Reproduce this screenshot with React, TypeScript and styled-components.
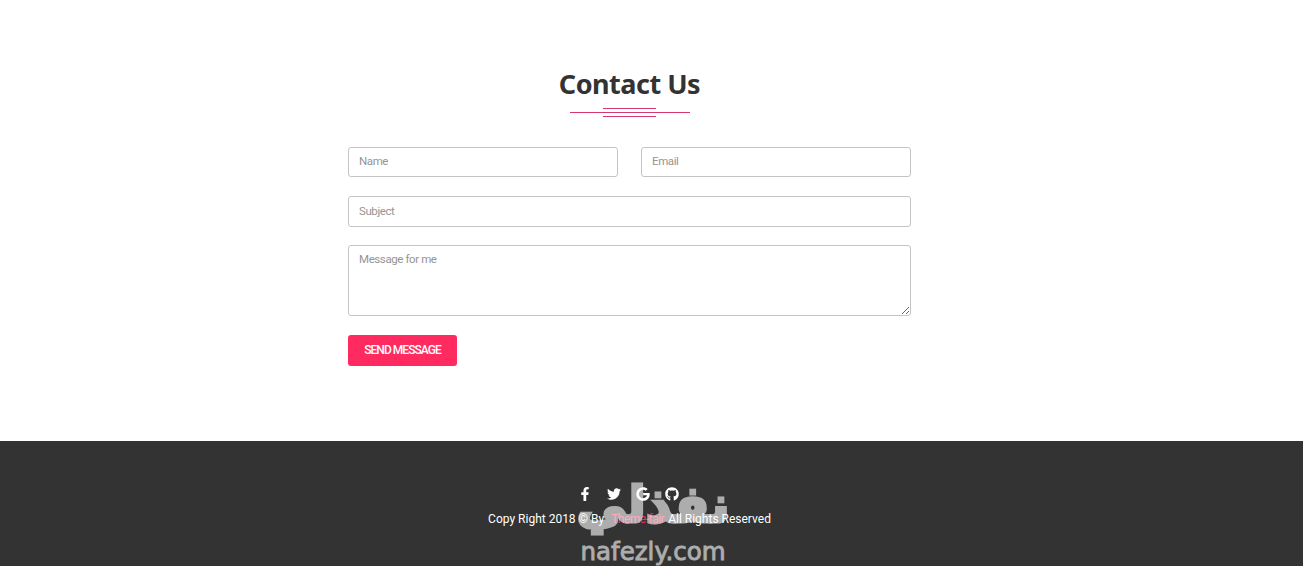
import React from 'react';
import styled, { createGlobalStyle } from 'styled-components';
import { FaFacebookF, FaTwitter, FaGoogle, FaGithub } from 'react-icons/fa';

const GlobalStyle = createGlobalStyle`
  html, body {
    margin: 0;
    padding: 0;
    background: #fff;
    font-family: Roboto, 'Liberation Sans', sans-serif;
  }
  * {
    box-sizing: border-box;
  }
`;

const App: React.FC = () => {
  return (
    <Page>
      <GlobalStyle />
      <ContactSection>
        <Title>Contact Us</Title>
        <Divider>
          <ShortLine />
          <LongLine />
          <ShortLine />
        </Divider>
        <Form>
          <Row>
            <SmallInput placeholder="Name" />
            <SmallInput placeholder="Email" />
          </Row>
          <WideInput placeholder="Subject" />
          <Message placeholder="Message for me" />
          <SendButton type="button">SEND MESSAGE</SendButton>
        </Form>
      </ContactSection>
      <Footer>
        <Socials>
          <SocialLink><FaFacebookF /></SocialLink>
          <SocialLink><FaTwitter /></SocialLink>
          <SocialLink><FaGoogle /></SocialLink>
          <SocialLink><FaGithub /></SocialLink>
        </Socials>
        <Copy>
          Copy Right 2018 © By <ThemeLink>Theme-fair</ThemeLink> All Rights Reserved
        </Copy>
        <Watermark>
          <WatermarkArabic>نفذلي</WatermarkArabic>
          <WatermarkLatin>nafezly.com</WatermarkLatin>
        </Watermark>
      </Footer>
    </Page>
  );
};

export default App;

const Page = styled.div`
  width: 100%;
  height: 566px;
  overflow: hidden;
  display: flex;
  flex-direction: column;
`;

const ContactSection = styled.section`
  height: 441px;
  padding: 65px 44px 0 0;
  display: flex;
  flex-direction: column;
  align-items: center;
`;

const Title = styled.h2`
  margin: 0;
  font-family: 'Noto Sans', 'Open Sans', sans-serif;
  font-size: 27px;
  line-height: 38px;
  font-weight: 700;
  letter-spacing: -0.5px;
  color: #333;
`;

const Divider = styled.div`
  margin-top: 5px;
  display: flex;
  flex-direction: column;
  align-items: center;
  gap: 3px;
  width: 120px;
`;

const ShortLine = styled.div`
  width: 53px;
  height: 1px;
  background: #d4386c;
`;

const LongLine = styled.div`
  width: 120px;
  height: 1px;
  background: #d4386c;
`;

const Form = styled.form`
  width: 563px;
  margin-top: 30px;
  display: flex;
  flex-direction: column;
`;

const Row = styled.div`
  display: flex;
  justify-content: space-between;
  margin-bottom: 19px;
`;

const fieldStyles = `
  display: block;
  border: 1px solid #c4c4c4;
  border-radius: 3px;
  padding: 0 10px;
  font-family: Roboto, 'Liberation Sans', sans-serif;
  font-size: 11.5px;
  letter-spacing: -0.4px;
  color: #333;
  background: #fff;
  outline: none;
  &::placeholder {
    color: #959595;
    opacity: 1;
  }
`;

const SmallInput = styled.input`
  ${fieldStyles}
  width: 270px;
  height: 30px;
  padding-bottom: 2px;
`;

const WideInput = styled.input`
  ${fieldStyles}
  width: 100%;
  height: 31px;
  margin-bottom: 18px;
  padding-bottom: 2px;
`;

const Message = styled.textarea`
  ${fieldStyles}
  width: 100%;
  height: 71px;
  padding-top: 6px;
  margin-bottom: 19px;
  resize: vertical;
`;

const SendButton = styled.button`
  width: 109px;
  height: 31px;
  padding: 0 0 2px;
  border: none;
  border-radius: 3px;
  background: #ff2a5f;
  color: #fff;
  font-family: Roboto, 'Liberation Sans', sans-serif;
  font-size: 12px;
  font-weight: 500;
  letter-spacing: -0.95px;
`;

const Footer = styled.footer`
  position: relative;
  flex: 1;
  background: #333;
  padding: 45px 44px 0 0;
  display: flex;
  flex-direction: column;
  align-items: center;
`;

const Socials = styled.div`
  display: flex;
  gap: 15px;
  height: 16px;
  margin-left: -2px;
  margin-bottom: 9px;
`;

const SocialLink = styled.a`
  display: flex;
  align-items: center;
  justify-content: center;
  width: 14px;
  font-size: 14px;
  color: #fff;
`;

const Copy = styled.p`
  margin: 0;
  font-size: 12px;
  line-height: 16px;
  color: #fff;
`;

const ThemeLink = styled.a`
  color: #ff2a5f;
  margin: 0 1px 0 4px;
  letter-spacing: -0.5px;
`;

const Watermark = styled.div`
  position: absolute;
  left: 575px;
  top: 34px;
  width: 156px;
  display: flex;
  flex-direction: column;
  align-items: center;
  color: #fff;
  opacity: 0.6;
  pointer-events: none;
`;

const WatermarkArabic = styled.div`
  font-family: 'DejaVu Sans', sans-serif;
  font-size: 50px;
  font-weight: 700;
  line-height: 60px;
  -webkit-text-stroke: 3px #fff;
`;

const WatermarkLatin = styled.div`
  font-family: 'DejaVu Sans', sans-serif;
  font-size: 24.5px;
  line-height: 28px;
  -webkit-text-stroke: 0.8px #fff;
  margin-top: 3px;
`;
